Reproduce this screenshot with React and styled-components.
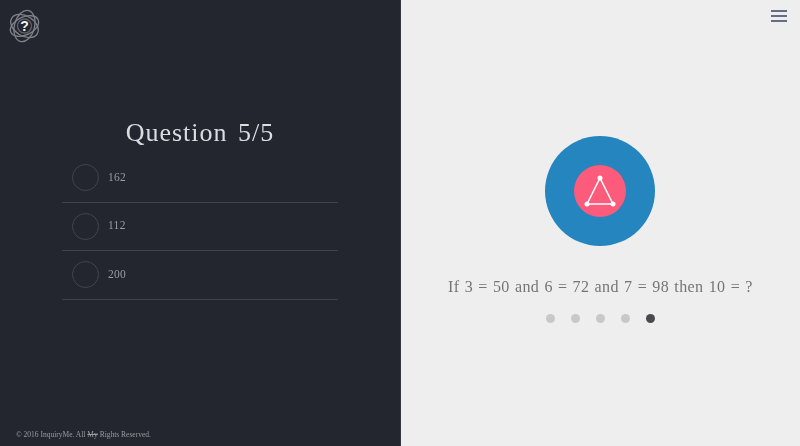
import React from "react";
import styled, { createGlobalStyle } from "styled-components";

const Global = createGlobalStyle`
  html, body { margin: 0; padding: 0; height: 100%; overflow: hidden; }
  #root { height: 100%; }
  * { box-sizing: border-box; }
`;

const SLAB = `"Liberation Serif", "DejaVu Serif", serif`;

const Page = styled.div`
  display: flex;
  width: 800px;
  height: 446px;
  font-family: ${SLAB};
`;

const LeftPanel = styled.section`
  width: 401px;
  height: 100%;
  background: #23262f;
  border-right: 1px solid #34373f;
  display: flex;
  flex-direction: column;
  padding: 8px 0 0 0;
`;

const LogoMark = styled.svg`
  display: block;
  width: 34px;
  height: 36px;
  margin-left: 8px;
  flex: none;
`;

const Quiz = styled.div`
  display: flex;
  flex-direction: column;
  margin-top: 73px;
`;

const Title = styled.h1`
  margin: 0;
  height: 32px;
  line-height: 32px;
  font-size: 26px;
  font-weight: 400;
  letter-spacing: 1px;
  word-spacing: 3px;
  text-align: center;
  color: #dcdde0;
  will-change: transform;
`;

const Options = styled.ul`
  list-style: none;
  margin: 5px 0 0 62px;
  padding: 0;
  width: 276px;
  will-change: transform;
`;

const Option = styled.li`
  display: flex;
  align-items: center;
  gap: 9px;
  height: 48.5px;
  padding: 0 0 0 10px;
  border-bottom: 1px solid #40434c;
  font-size: 11.5px;
  letter-spacing: 0.3px;
  color: #9a9ca3;
`;

const Radio = styled.span`
  width: 27px;
  height: 27px;
  border-radius: 50%;
  border: 1px solid #42454d;
  flex: none;
`;

const OptionLabel = styled.span`
  margin-bottom: 2px;
`;

const Footer = styled.footer`
  margin-top: auto;
  padding: 0 0 6px 16px;
  font-size: 7.5px;
  line-height: 10px;
  letter-spacing: 0;
  color: #9a9ca2;
  will-change: transform;
  s { text-decoration: line-through; }
`;

const RightPanel = styled.section`
  flex: 1;
  height: 100%;
  background: #eeeeee;
  display: flex;
  flex-direction: column;
  align-items: center;
  padding-right: 1px;
`;

const TopBar = styled.div`
  align-self: stretch;
  display: flex;
  justify-content: flex-end;
  padding: 10px 12px 1px 0;
`;

const MenuButton = styled.div`
  width: 16px;
  height: 12px;
  display: flex;
  flex-direction: column;
  justify-content: space-between;
  span {
    display: block;
    height: 2px;
    background: #666e85;
  }
`;

const Disc = styled.div`
  margin-top: 113px;
  width: 110px;
  height: 110px;
  border-radius: 50%;
  background: #2585bf;
  display: flex;
  align-items: center;
  justify-content: center;
`;

const Badge = styled.div`
  width: 52px;
  height: 52px;
  border-radius: 50%;
  background: #fd5b7c;
  display: flex;
  align-items: center;
  justify-content: center;
`;

const Question = styled.p`
  margin: 31px 0 0;
  height: 20px;
  line-height: 20px;
  font-size: 16px;
  letter-spacing: 0.4px;
  word-spacing: 0.8px;
  color: #757575;
  white-space: nowrap;
  will-change: transform;
`;

const Dots = styled.div`
  display: flex;
  gap: 16px;
  margin-top: 17px;
`;

const Dot = styled.span`
  width: 9px;
  height: 9px;
  border-radius: 50%;
  background: ${(p) => (p.$active ? "#4a4a4c" : "#c8c8c8")};
`;

const Logo = () => (
  <LogoMark viewBox="0 0 34 36" fill="none" stroke="#7f8188" strokeWidth="1.3">
    <circle cx="16.5" cy="18" r="7" stroke="#5f6169" />
    <ellipse cx="16.5" cy="18" rx="15" ry="10" transform="rotate(32 16.5 18)" />
    <ellipse cx="16.5" cy="18" rx="15" ry="9" transform="rotate(-25 16.5 18)" />
    <ellipse cx="16.5" cy="18" rx="10" ry="16" transform="rotate(15 16.5 18)" />
    <text x="16.5" y="23" textAnchor="middle" fontSize="14" fontWeight="700" fontFamily="Liberation Sans, sans-serif" fill="#f2f2f2" stroke="none">?</text>
  </LogoMark>
);

const TriangleIcon = () => (
  <svg width="34" height="34" viewBox="0 0 34 34" fill="none">
    <path d="M17 4 L30 30 L4 30 Z" stroke="#fff" strokeWidth="1.6" strokeLinejoin="round" />
    <circle cx="17" cy="4" r="2.5" fill="#fff" />
    <circle cx="4" cy="30" r="2.5" fill="#fff" />
    <circle cx="30" cy="30" r="2.5" fill="#fff" />
  </svg>
);

export default function App() {
  return (
    <Page>
      <Global />
      <LeftPanel>
        <Logo />
        <Quiz>
          <Title>Question 5/5</Title>
          <Options>
            {["162", "112", "200"].map((o) => (
              <Option key={o}>
                <Radio />
                <OptionLabel>{o}</OptionLabel>
              </Option>
            ))}
          </Options>
        </Quiz>
        <Footer>
          © 2016 InquiryMe. All <s>My</s> Rights Reserved.
        </Footer>
      </LeftPanel>
      <RightPanel>
        <TopBar>
          <MenuButton>
            <span />
            <span />
            <span />
          </MenuButton>
        </TopBar>
        <Disc>
          <Badge>
            <TriangleIcon />
          </Badge>
        </Disc>
        <Question>If 3 = 50 and 6 = 72 and 7 = 98 then 10 = ?</Question>
        <Dots>
          {[0, 1, 2, 3, 4].map((i) => (
            <Dot key={i} $active={i === 4} />
          ))}
        </Dots>
      </RightPanel>
    </Page>
  );
}
